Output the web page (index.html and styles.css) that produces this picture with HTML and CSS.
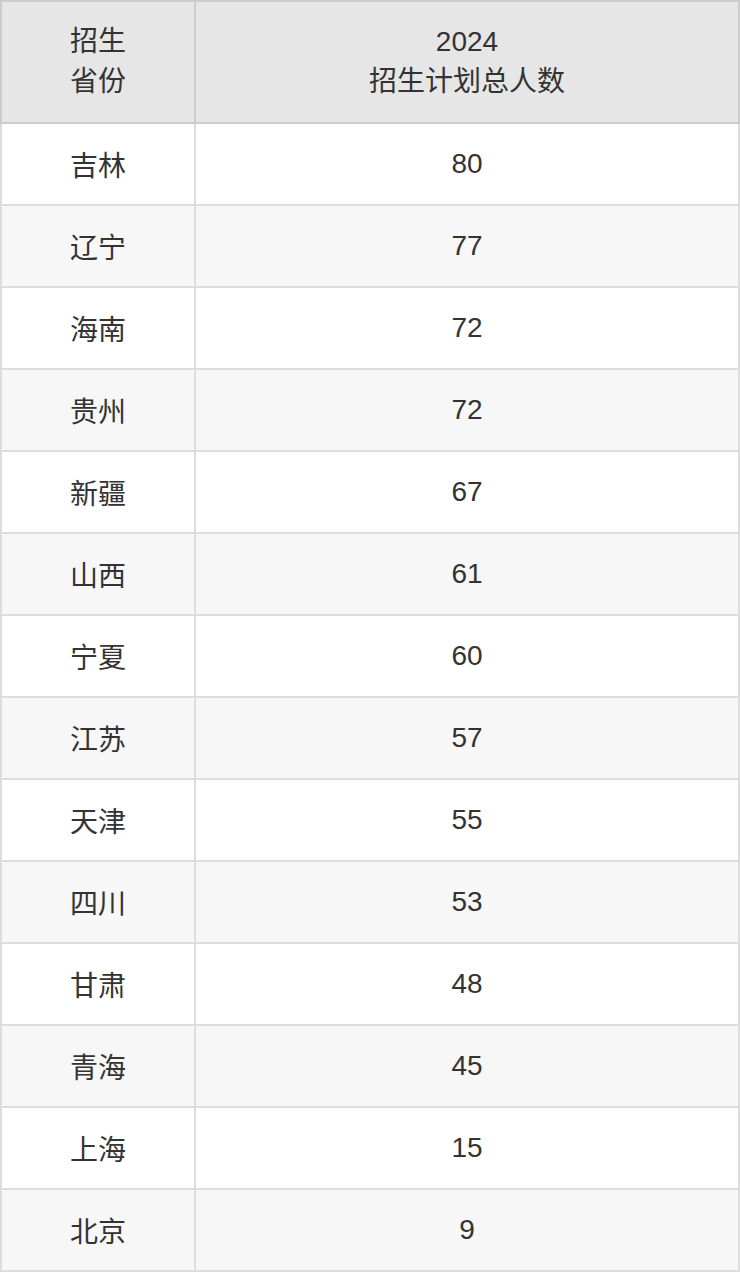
FILE: index.html
```html
<!DOCTYPE html>
<html lang="zh-CN">
<head>
<meta charset="utf-8">
<title>招生计划</title>
<link rel="stylesheet" href="styles.css">
</head>
<body>
<div class="table">
  <div class="head">
    <div class="hcell"><span>招生</span><span>省份</span></div>
    <div class="hcell"><span>2024</span><span>招生计划总人数</span></div>
  </div>
  <div class="body">
    <div class="row"><div class="cell">吉林</div><div class="cell">80</div></div>
    <div class="row"><div class="cell">辽宁</div><div class="cell">77</div></div>
    <div class="row"><div class="cell">海南</div><div class="cell">72</div></div>
    <div class="row"><div class="cell">贵州</div><div class="cell">72</div></div>
    <div class="row"><div class="cell">新疆</div><div class="cell">67</div></div>
    <div class="row"><div class="cell">山西</div><div class="cell">61</div></div>
    <div class="row"><div class="cell">宁夏</div><div class="cell">60</div></div>
    <div class="row"><div class="cell">江苏</div><div class="cell">57</div></div>
    <div class="row"><div class="cell">天津</div><div class="cell">55</div></div>
    <div class="row"><div class="cell">四川</div><div class="cell">53</div></div>
    <div class="row"><div class="cell">甘肃</div><div class="cell">48</div></div>
    <div class="row"><div class="cell">青海</div><div class="cell">45</div></div>
    <div class="row"><div class="cell">上海</div><div class="cell">15</div></div>
    <div class="row"><div class="cell">北京</div><div class="cell">9</div></div>
  </div>
</div>
</body>
</html>
```

FILE: styles.css
```css
html, body {
  margin: 0;
  padding: 0;
  background: #fff;
}
body {
  font-family: "Liberation Sans", Arial, "Noto Sans CJK SC", sans-serif;
  font-size: 28px;
  color: #333;
}
.table {
  width: 740px;
}
.head {
  display: grid;
  grid-template-columns: 192px 1fr;
  gap: 2px;
  padding: 2px;
  background: #ccc;
}
.hcell {
  background: #e6e6e6;
  height: 120px;
  display: flex;
  flex-direction: column;
  align-items: center;
  justify-content: center;
  line-height: 40px;
}
.body {
  display: flex;
  flex-direction: column;
  gap: 2px;
  padding: 0 2px 2px;
  background: #ddd;
}
.row {
  display: grid;
  grid-template-columns: 192px 1fr;
  gap: 2px;
}
.cell {
  height: 80px;
  display: flex;
  align-items: center;
  justify-content: center;
  background: #fff;
}
.row:nth-child(even) .cell {
  background: #f7f7f7;
}
```
